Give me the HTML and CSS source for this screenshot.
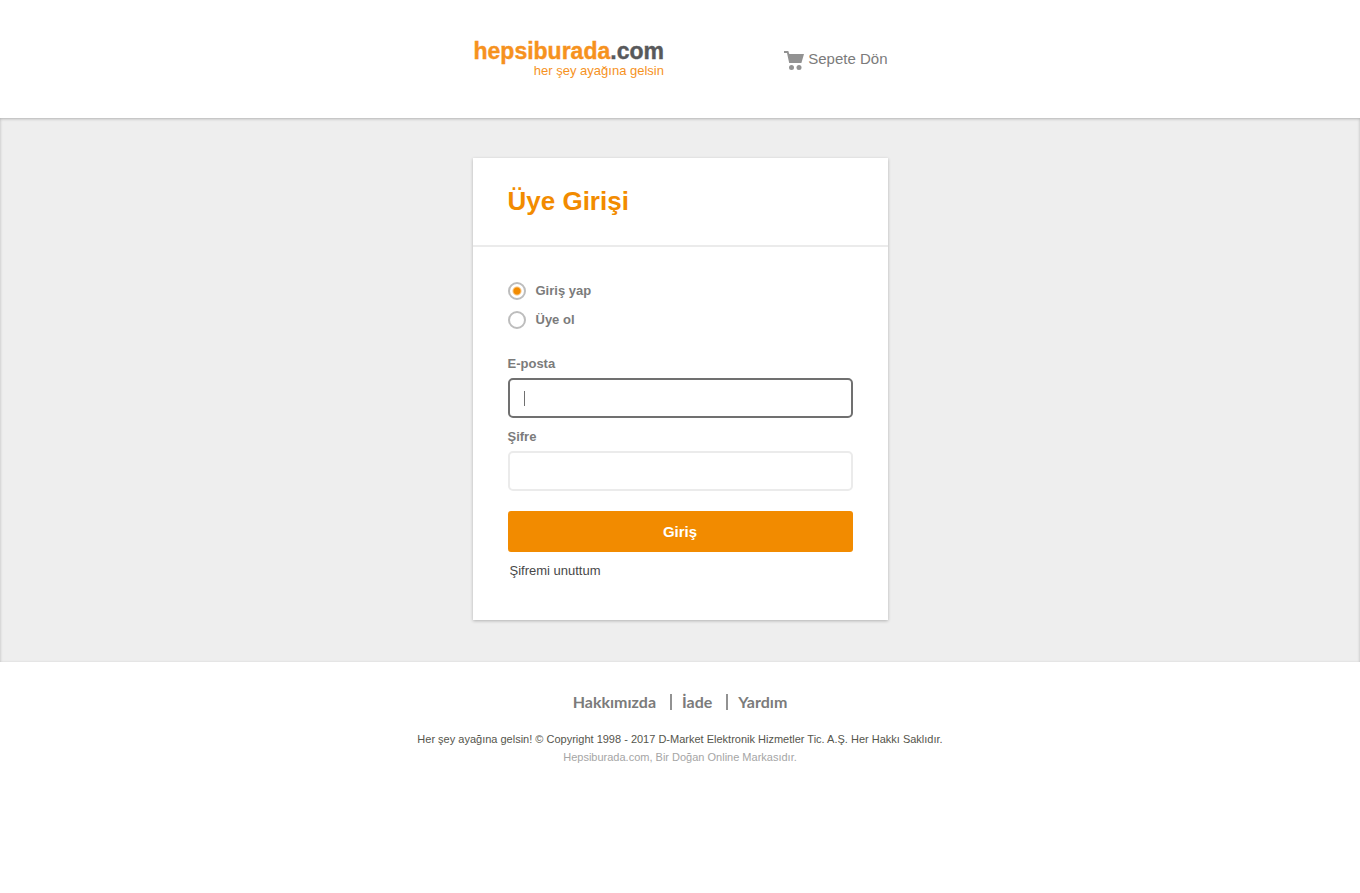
FILE: index.html
```html
<!DOCTYPE html>
<html lang="tr">
<head>
<meta charset="utf-8">
<meta name="viewport" content="width=device-width, initial-scale=1">
<title>Üye Girişi</title>
<link rel="stylesheet" href="styles.css">
</head>
<body>
<header class="header">
  <div class="header-inner">
    <a class="logo" href="#">
      <span class="logo-name">hepsiburada<span class="logo-domain">.com</span></span>
      <span class="logo-slogan">her şey ayağına gelsin</span>
    </a>
    <a class="cart-link" href="#">
      <svg class="cart-icon" viewBox="0 0 20 20" width="20" height="20" aria-hidden="true">
        <path d="M0 0h4.300l1 3H20l-2.600 9H5.200L3 2H0z"/>
        <circle cx="7.500" cy="16.500" r="2.500"/>
        <circle cx="15" cy="16.500" r="2.500"/>
      </svg>
      <span>Sepete Dön</span>
    </a>
  </div>
</header>
<main class="main">
  <section class="card">
    <h1 class="card-title">Üye Girişi</h1>
    <form class="form">
      <div class="choices">
        <label class="choice"><input class="radio" type="radio" name="mode" checked>Giriş yap</label>
        <label class="choice"><input class="radio" type="radio" name="mode">Üye ol</label>
      </div>
      <label class="label" for="email">E-posta</label>
      <input class="field" id="email" type="text" placeholder=" " autofocus>
      <label class="label" for="password">Şifre</label>
      <input class="field" id="password" type="password" placeholder=" ">
      <button class="submit" type="button">Giriş</button>
      <a class="forgot" href="#">Şifremi unuttum</a>
    </form>
  </section>
</main>
<footer class="footer">
  <nav class="footer-nav">
    <a class="footer-link" href="#">Hakkımızda</a>
    <a class="footer-link" href="#">İade</a>
    <a class="footer-link" href="#">Yardım</a>
  </nav>
  <p class="copyright">Her şey ayağına gelsin! © Copyright 1998 - 2017 D-Market Elektronik Hizmetler Tic. A.Ş. Her Hakkı Saklıdır.</p>
  <p class="brand-note">Hepsiburada.com, Bir Doğan Online Markasıdır.</p>
</footer>
</body>
</html>
```
FILE: styles.css
```css
* { box-sizing: border-box; }

body {
  margin: 0;
  background: #fff;
  color: #7b7b7b;
  font-family: "Liberation Sans", Arial, sans-serif;
  font-size: 13px;
}

a { color: inherit; text-decoration: none; }

.header { padding: 38px 16px 40px; }

.header-inner {
  display: flex;
  justify-content: space-between;
  align-items: center;
  max-width: 415px;
  margin: 0 auto;
}

.logo {
  display: flex;
  flex-direction: column;
  align-items: flex-end;
  margin-left: 1px;
  color: #f6921e;
}

.logo-name {
  font-size: 23px;
  line-height: 26px;
  font-weight: bold;
  -webkit-text-stroke: 0.4px currentColor;
}

.logo-domain { color: #58595b; }

.logo-slogan {
  font-size: 13px;
  line-height: 14px;
}

.cart-link {
  display: flex;
  gap: 4px;
  padding-top: 4px;
  font-size: 15px;
  line-height: 18px;
}

.cart-icon { fill: #929292; margin-top: 1px; }

.main {
  padding: 40px 16px 42px;
  background: #eee;
  box-shadow: inset 0 1px 3px rgba(0, 0, 0, .25);
}

.card {
  max-width: 415px;
  margin: 0 auto;
  background: #fff;
  box-shadow: 0 1px 3px rgba(0, 0, 0, .25);
}

.card-title {
  margin: 0;
  padding: 28px 35px 29px;
  border-bottom: 2px solid #ebebeb;
  color: #f28b00;
  font-size: 26px;
  line-height: 30px;
}

.form {
  display: flex;
  flex-direction: column;
  padding: 35px 35px 40px;
}

.choices {
  display: flex;
  flex-direction: column;
  align-items: flex-start;
  gap: 11px;
  margin-bottom: 26px;
}

.choice {
  display: flex;
  align-items: center;
  gap: 10px;
  font-weight: bold;
  line-height: 18px;
}

.radio {
  appearance: none;
  width: 18px;
  height: 18px;
  margin: 0;
  border: 2px solid #bdbdbd;
  border-radius: 50%;
  background: #fff;
}

.radio:checked { background: radial-gradient(circle, #f28b00 0 3px, #fff 5px); }

.label {
  margin-bottom: 5px;
  font-weight: bold;
  line-height: 18px;
}

.field {
  width: 100%;
  height: 40px;
  margin-bottom: 10px;
  padding: 0 14px;
  border: 2px solid #ebebeb;
  border-radius: 5px;
  outline: none;
  background: #fff;
  color: #4a4a4a;
  font: 13px "Liberation Sans", Arial, sans-serif;
}

.field:focus { border-color: #707070; }

/* Steady caret while the focused field is empty */
.field:focus:placeholder-shown {
  caret-color: transparent;
  background: linear-gradient(#707070, #707070) 14px center / 1px 15px no-repeat #fff;
}

.submit {
  height: 41px;
  margin-top: 10px;
  border: 0;
  border-radius: 3px;
  background: #f28b00;
  color: #fff;
  font: bold 15px "Liberation Sans", Arial, sans-serif;
}

.forgot {
  margin-top: 10px;
  padding-left: 2px;
  color: #484848;
  line-height: 18px;
}

.footer { padding: 30px 16px; text-align: center; }

.footer-nav {
  display: flex;
  justify-content: center;
  margin-bottom: 18px;
  font: bold 16px/20px Lato, sans-serif;
}

.footer-link {
  display: flex;
  align-items: center;
}

.footer-link + .footer-link::before {
  content: "";
  width: 2px;
  height: 16px;
  margin: 0 10px 0 14px;
  background: #929292;
}

.copyright,
.brand-note {
  margin: 0;
  font-size: 11px;
  line-height: 18px;
}

.copyright { color: #55554c; }

.brand-note { color: #a5a5a5; }
```
